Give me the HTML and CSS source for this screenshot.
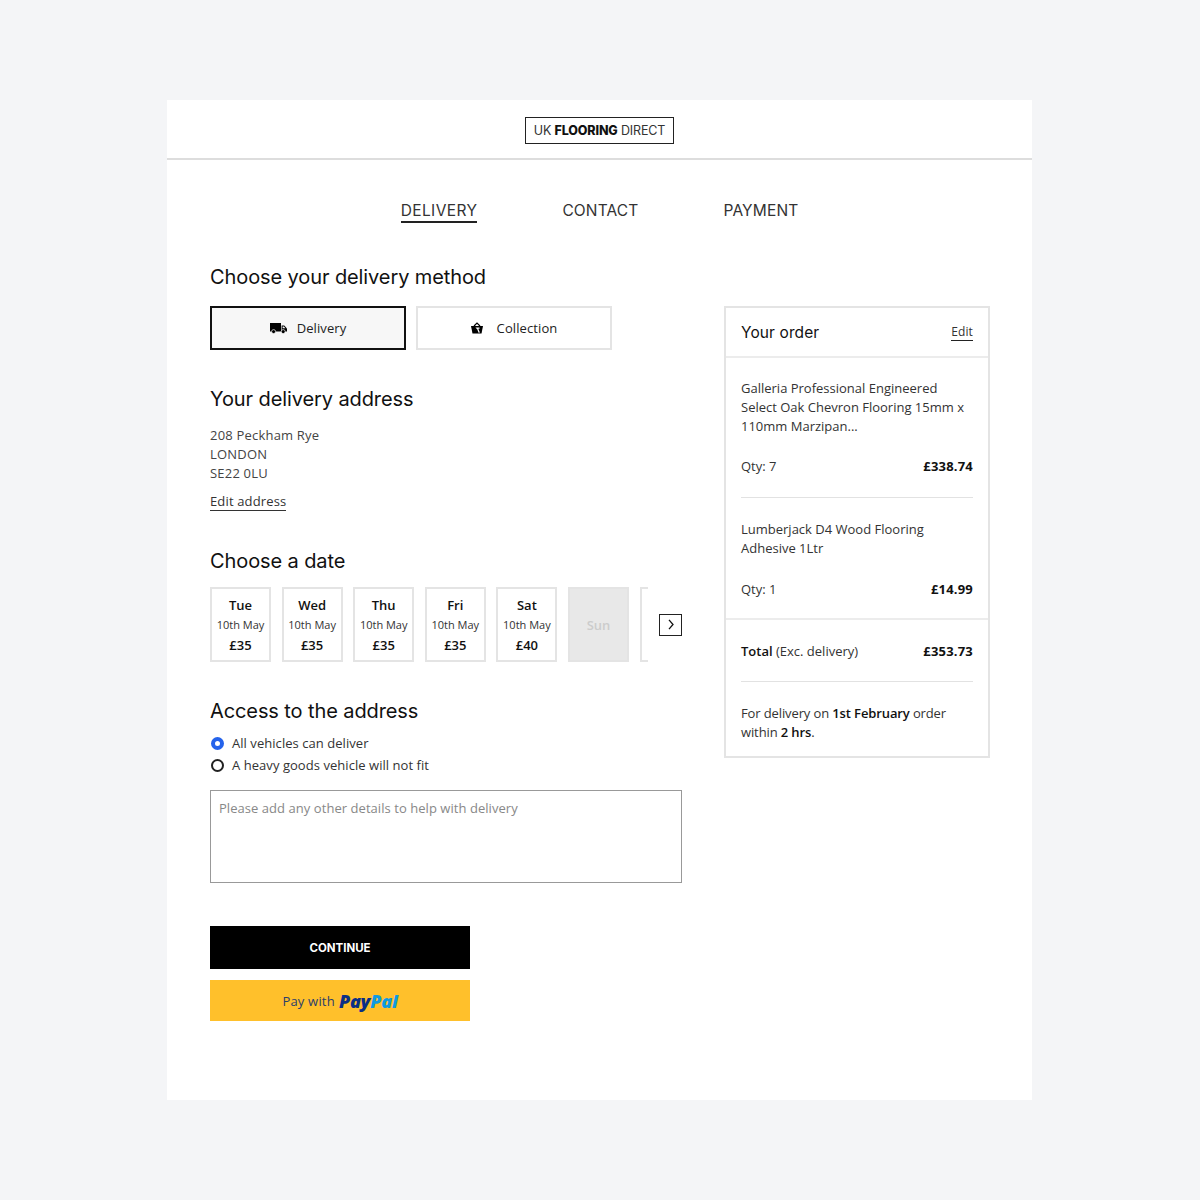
FILE: index.html
```html
<!DOCTYPE html>
<html lang="en">
<head>
  <meta charset="UTF-8">
  <meta name="viewport" content="width=device-width, initial-scale=1.0">
  <title>UK Flooring Direct - Delivery</title>
  <link rel="stylesheet" href="styles.css">
</head>
<body>
  <div class="page">
    <header class="site-header">
      <div class="logo">UK <b>FLOORING</b> DIRECT</div>
    </header>

    <nav class="steps">
      <a class="step step-active">DELIVERY</a>
      <a class="step">CONTACT</a>
      <a class="step">PAYMENT</a>
    </nav>

    <div class="layout">
      <main class="main-col">
        <h2 class="heading">Choose your delivery method</h2>
        <div class="methods">
          <button class="method method-active">
            <svg class="method-icon" width="17" height="11" viewBox="0 0 17 11"><path d="M0 0h11v8.5h-11z"/><path d="M11.6 2.5h2.6l2.8 3v3h-5.4z"/><path d="M12.6 3.4h1.3l1.5 1.8h-2.8z" fill="#f7f7f7"/><circle cx="3.6" cy="8.6" r="2" stroke="#f7f7f7" stroke-width="0.7"/><circle cx="13.2" cy="8.6" r="2" stroke="#f7f7f7" stroke-width="0.7"/></svg>
            Delivery
          </button>
          <button class="method method-collect">
            <svg class="method-icon" width="12" height="12" viewBox="0 0 12 12"><path d="M0 4h12l-1.5 7.5h-9z"/><path d="M3 4l3-3 3 3" fill="none" stroke="#000" stroke-width="1.2"/><path d="M4.5 5.5h4v1.2h-1.2l1.6 3.8-1.3.3-1.6-4.1h-.5z" fill="#fff"/></svg>
            Collection
          </button>
        </div>

        <h2 class="heading heading-address">Your delivery address</h2>
        <p class="address">208 Peckham Rye<br>LONDON<br>SE22 0LU</p>
        <a class="edit-address">Edit address</a>

        <h2 class="heading heading-date">Choose a date</h2>
        <div class="date-row">
          <div class="dates">
            <div class="date"><strong>Tue</strong><span>10th May</span><strong>£35</strong></div>
            <div class="date"><strong>Wed</strong><span>10th May</span><strong>£35</strong></div>
            <div class="date"><strong>Thu</strong><span>10th May</span><strong>£35</strong></div>
            <div class="date"><strong>Fri</strong><span>10th May</span><strong>£35</strong></div>
            <div class="date"><strong>Sat</strong><span>10th May</span><strong>£40</strong></div>
            <div class="date date-off">Sun</div>
            <div class="date"></div>
          </div>
          <button class="next">
            <svg width="6" height="11" viewBox="0 0 6 11"><path d="M1 .8l4 4.7-4 4.7" fill="none" stroke="#111" stroke-width="1.3"/></svg>
          </button>
        </div>

        <h2 class="heading heading-access">Access to the address</h2>
        <div class="radio"><span class="radio-dot radio-on"></span>All vehicles can deliver</div>
        <div class="radio"><span class="radio-dot"></span>A heavy goods vehicle will not fit</div>
        <textarea class="notes" placeholder="Please add any other details to help with delivery"></textarea>

        <button class="continue">CONTINUE</button>
        <button class="paypal">Pay with <span class="pp-logo"><span class="pp-pay">Pay</span><span class="pp-pal">Pal</span></span></button>
      </main>

      <aside class="order">
        <div class="order-head">
          <h3>Your order</h3>
          <a class="order-edit">Edit</a>
        </div>
        <div class="order-items">
          <div class="item">
            <p>Galleria Professional Engineered Select Oak Chevron Flooring 15mm x 110mm Marzipan...</p>
            <div class="item-row"><span>Qty: 7</span><strong>£338.74</strong></div>
          </div>
          <div class="item item-last">
            <p>Lumberjack D4 Wood Flooring<br>Adhesive 1Ltr</p>
            <div class="item-row"><span>Qty: 1</span><strong>£14.99</strong></div>
          </div>
        </div>
        <div class="order-foot">
          <div class="item-row total"><span><b>Total</b> (Exc. delivery)</span><strong>£353.73</strong></div>
          <p class="cutoff">For delivery on <b>1st February</b> order within <b>2 hrs</b>.</p>
        </div>
      </aside>
    </div>
  </div>
</body>
</html>
```

FILE: styles.css
```css
* {
  box-sizing: border-box;
}
body {
  margin: 0;
  background-color: #f4f5f7;
  font-family: "Open Sans", Arial, sans-serif;
  font-size: 13px;
  color: #333;
}
.page {
  width: 865px;
  height: 1000px;
  margin: 100px 0 100px 167px;
  background-color: white;
}
.site-header {
  height: 60px;
  border-bottom: 2px solid #ddd;
  padding-top: 17px;
  display: flex;
  justify-content: center;
}
.logo {
  width: 149px;
  height: 27px;
  border: 1px solid #222;
  font-family: Inter, Arial, sans-serif;
  font-size: 12.5px;
  letter-spacing: -0.15px;
  line-height: 25px;
  text-align: center;
  white-space: nowrap;
  color: #333;
}
.logo b {
  font-weight: 800;
  color: #111;
}
.steps {
  display: flex;
  justify-content: center;
  gap: 85px;
  padding-top: 41px;
  height: 104px;
}
.step {
  height: 22px;
  font-family: Inter, Arial, sans-serif;
  font-size: 15.5px;
  letter-spacing: 0.15px;
  line-height: 20px;
  color: #333;
}
.step-active {
  border-bottom: 2px solid #222;
  letter-spacing: 0.4px;
}
.layout {
  display: flex;
  padding: 0 42px 0 43px;
  justify-content: space-between;
  align-items: flex-start;
}
.main-col {
  width: 472px;
}
.heading {
  margin: 0;
  font-family: Inter, Arial, sans-serif;
  font-size: 20px;
  font-weight: 400;
  letter-spacing: -0.1px;
  line-height: 26px;
  color: #111;
}
.methods {
  display: flex;
  gap: 10px;
  margin-top: 16px;
}
.method {
  width: 196px;
  height: 44px;
  border: 2px solid #e4e4e4;
  background-color: white;
  font-family: "Open Sans", Arial, sans-serif;
  font-size: 13px;
  letter-spacing: 0.1px;
  color: #222;
  display: flex;
  align-items: center;
  justify-content: center;
  gap: 10px;
}
.method-active {
  border-color: #111;
  background-color: #f7f7f7;
}
.method-collect {
  gap: 14px;
}
.heading-address {
  margin-top: 36px;
}
.address {
  margin: 14px 0 0;
  line-height: 19px;
  letter-spacing: 0.2px;
  color: #444;
}
.edit-address {
  display: inline-block;
  margin-top: 10px;
  line-height: 17px;
  letter-spacing: 0.15px;
  border-bottom: 1px solid #333;
}
.heading-date {
  margin-top: 37px;
}
.date-row {
  display: flex;
  justify-content: space-between;
  align-items: center;
  margin-top: 13px;
}
.dates {
  width: 438px;
  display: flex;
  gap: 10.6px;
  overflow: hidden;
}
.date {
  flex: 0 0 61px;
  height: 75px;
  border: 2px solid #e4e4e4;
  display: flex;
  flex-direction: column;
  align-items: center;
  justify-content: center;
  gap: 2px;
  font-size: 11px;
  line-height: 18px;
}
.date strong {
  font-size: 13px;
  font-weight: 600;
  color: #111;
}
.date-off {
  background-color: #e8e8e8;
  color: #ccc;
  font-size: 13px;
  font-weight: 600;
}
.next {
  width: 23px;
  height: 22px;
  padding: 0;
  border: 1px solid #222;
  background-color: white;
  display: flex;
  align-items: center;
  justify-content: center;
}
.heading-access {
  margin-top: 36px;
}
.radio {
  display: flex;
  align-items: center;
  gap: 8px;
  height: 22px;
  padding-left: 1px;
  letter-spacing: 0.05px;
}
.heading-access + .radio {
  margin-top: 8px;
}
.radio-dot {
  width: 13px;
  height: 13px;
  border: 2px solid #222;
  border-radius: 50%;
}
.radio-on {
  border: 4px solid #2563eb;
}
.notes {
  display: block;
  width: 472px;
  height: 93px;
  margin-top: 14px;
  padding: 8px;
  border: 1px solid #999;
  border-radius: 0;
  resize: none;
  font-family: "Open Sans", Arial, sans-serif;
  font-size: 13px;
  letter-spacing: 0.05px;
  line-height: 18px;
}
.notes::placeholder {
  color: #888;
}
.continue {
  display: block;
  width: 260px;
  height: 43px;
  margin-top: 43px;
  border: none;
  background-color: black;
  color: white;
  font-family: Inter, Arial, sans-serif;
  font-size: 11.5px;
  font-weight: 700;
}
.paypal {
  display: flex;
  align-items: center;
  justify-content: center;
  gap: 4px;
  width: 260px;
  height: 41px;
  margin-top: 11px;
  border: none;
  background-color: #ffc02b;
  color: #2c3e6b;
  font-family: "Open Sans", Arial, sans-serif;
  font-size: 13px;
  letter-spacing: 0.2px;
}
.pp-logo {
  font-family: "Open Sans", Arial, sans-serif;
  font-size: 18px;
  font-weight: 800;
  font-style: italic;
  letter-spacing: -0.2px;
}
.pp-pay {
  color: #0b2f85;
}
.pp-pal {
  color: #0f9ae0;
}
.order {
  width: 266px;
  height: 452px;
  margin-top: 42px;
  border: 2px solid #e4e4e4;
}
.order-head {
  height: 50px;
  padding: 0 15px;
  border-bottom: 2px solid #ececec;
  display: flex;
  align-items: center;
  justify-content: space-between;
}
.order-head h3 {
  margin: 0;
  font-family: Inter, Arial, sans-serif;
  font-size: 15.5px;
  font-weight: 400;
  letter-spacing: 0.1px;
  color: #111;
}
.order-edit {
  font-size: 12px;
  line-height: 17px;
  letter-spacing: 0.1px;
  border-bottom: 1px solid #222;
}
.order-items {
  padding: 0 15px;
  border-bottom: 2px solid #ececec;
}
.item {
  padding: 21px 0;
  border-bottom: 1px solid #e2e2e2;
}
.item-last {
  border-bottom: none;
  padding: 22px 0 19px;
}
.item-last .item-row {
  margin-top: 22px;
}
.item p {
  margin: 0;
  line-height: 19px;
}
.item-row {
  display: flex;
  justify-content: space-between;
  line-height: 19px;
  margin-top: 21px;
}
.item-row strong {
  color: #111;
  letter-spacing: 0.2px;
}
.order-foot {
  padding: 0 15px;
}
.total {
  margin-top: 0;
  padding: 22px 0 20px;
  border-bottom: 1px solid #e2e2e2;
}
.total b {
  font-weight: 600;
  color: #111;
}
.cutoff {
  margin: 22px 0 0;
  line-height: 19px;
  letter-spacing: -0.12px;
}
.cutoff b {
  font-weight: 600;
  color: #111;
}
```
